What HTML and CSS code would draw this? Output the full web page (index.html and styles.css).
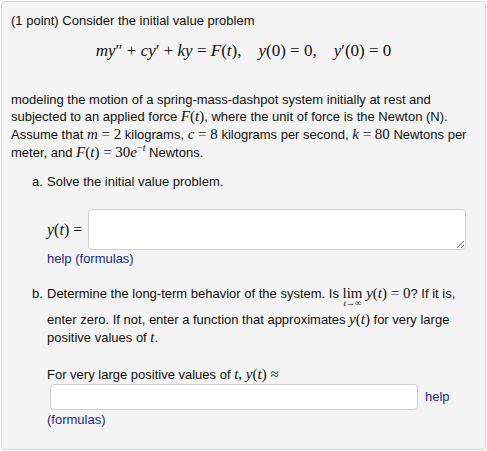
FILE: index.html
```html
<!DOCTYPE html>
<html>
<head>
<meta charset="utf-8">
<link rel="stylesheet" href="styles.css">
</head>
<body>
<div class="problem">
  <p class="intro">(1 point) Consider the initial value problem</p>
  <div class="display"><span class="m">my</span><span class="mr">″</span> <span class="op">+</span> <span class="m">cy</span><span class="mr">′</span> <span class="op">+</span> <span class="m">ky</span> <span class="op">=</span> <span class="m">F</span><span class="mr">(</span><span class="m">t</span><span class="mr">),</span><span class="sp"></span><span class="m">y</span><span class="mr">(0)</span> <span class="op">=</span> <span class="mr">0,</span><span class="sp"></span><span class="m">y</span><span class="mr">′(0)</span> <span class="op">=</span> <span class="mr">0</span></div>
  <p class="para">modeling the motion of a spring-mass-dashpot system initially at rest and subjected to an applied force <span class="im"><i>F</i>(<i>t</i>)</span>, where the unit of force is the Newton (N). Assume that <span class="im"><i>m</i> = 2</span> kilograms, <span class="im"><i>c</i> = 8</span> kilograms per second, <span class="im"><i>k</i> = 80</span> Newtons per meter, and <span class="im"><i>F</i>(<i>t</i>) = 30<i>e</i><sup>−<i>t</i></sup></span> Newtons.</p>

  <div class="part part-a">
    <span class="label">a.</span>
    <div class="body">
      <p class="q">Solve the initial value problem.</p>
      <div class="answer-row">
        <span class="im lhs"><i>y</i>(<i>t</i>) =</span>
        <textarea class="ta"></textarea>
      </div>
      <p class="help"><a href="#">help (formulas)</a></p>
    </div>
  </div>

  <div class="part part-b">
    <span class="label">b.</span>
    <div class="body">
      <p class="q qb">Determine the long-term behavior of the system. Is <span class="lim"><span class="limword">lim</span><span class="limsub"><i>t</i>→∞</span></span> <span class="im"><i>y</i>(<i>t</i>) = 0</span>? If it is, enter zero. If not, enter a function that approximates <span class="im"><i>y</i>(<i>t</i>)</span> for very large positive values of <span class="im"><i>t</i></span>.</p>
      <p class="q q2">For very large positive values of <span class="im"><i>t</i>, <i>y</i>(<i>t</i>) ≈</span></p>
      <div class="input-row">
        <input class="inp" type="text">
        <a href="#" class="side-help">help</a>
      </div>
      <p class="help help2"><a href="#">(formulas)</a></p>
    </div>
  </div>
</div>
</body>
</html>
```
FILE: styles.css
```css
html, body {
  margin: 0;
  padding: 0;
  background: #ffffff;
}
body {
  padding: 1px 0 0 1px;
  font-family: "Liberation Sans", Arial, sans-serif;
  font-size: 13px;
  color: #111;
}
.problem {
  box-sizing: border-box;
  width: 485px;
  height: 449px;
  background: #f4f4f4;
  border: 1px solid #d6d6d6;
  border-radius: 4px;
  padding: 10px 9px 0 9px;
  line-height: 17.7px;
}
p { margin: 0; }
.display {
  font-family: "Liberation Serif", "Times New Roman", serif;
  font-size: 17px;
  text-align: center;
  margin-top: 11px;
  height: 20px;
  line-height: 20px;
}
.display .m { font-style: italic; }
.display .sp { display: inline-block; width: 17px; }
.para { margin-top: 30px; }
.im {
  font-family: "Liberation Serif", "Times New Roman", serif;
  font-size: 15px;
  line-height: 1;
}
.im sup { font-size: 10px; line-height: 0; vertical-align: 6px; }
.part {
  display: flex;
  padding-left: 21px;
}
.label { width: 15px; flex: none; }
.body { flex: 1; }
.part-a { margin-top: 11px; }
.answer-row {
  display: flex;
  align-items: center;
  margin-top: 19px;
}
.lhs { width: 41px; flex: none; font-size: 16px; }
.ta {
  box-sizing: border-box;
  width: 378px;
  height: 41px;
  border: 1px solid #cfcfcf;
  border-radius: 4px;
  background: #fff;
  margin: 0;
  resize: vertical;
}
.help { margin-top: 0; }
a { color: #1a2a8c; text-decoration: none; }
.part-b { margin-top: 17px; }
.lim {
  display: inline-block;
  position: relative;
  font-family: "Liberation Serif", "Times New Roman", serif;
  font-size: 15px;
  line-height: 17px;
  height: 17px;
  vertical-align: baseline;
  margin-bottom: 9px;
}
.limsub {
  position: absolute;
  left: -2px;
  right: -2px;
  top: 14px;
  text-align: center;
  font-size: 9px;
  line-height: 9px;
  white-space: nowrap;
}
.q2 { margin-top: 20px; }
.input-row {
  display: flex;
  align-items: center;
  margin-top: 0;
}
.inp {
  box-sizing: border-box;
  width: 368px;
  height: 26px;
  border: 1px solid #cfcfcf;
  border-radius: 4px;
  background: #fff;
  margin: 0 0 0 3px;
}
.side-help { margin-left: 7px; }
.help2 { margin-top: 1px; }
```
